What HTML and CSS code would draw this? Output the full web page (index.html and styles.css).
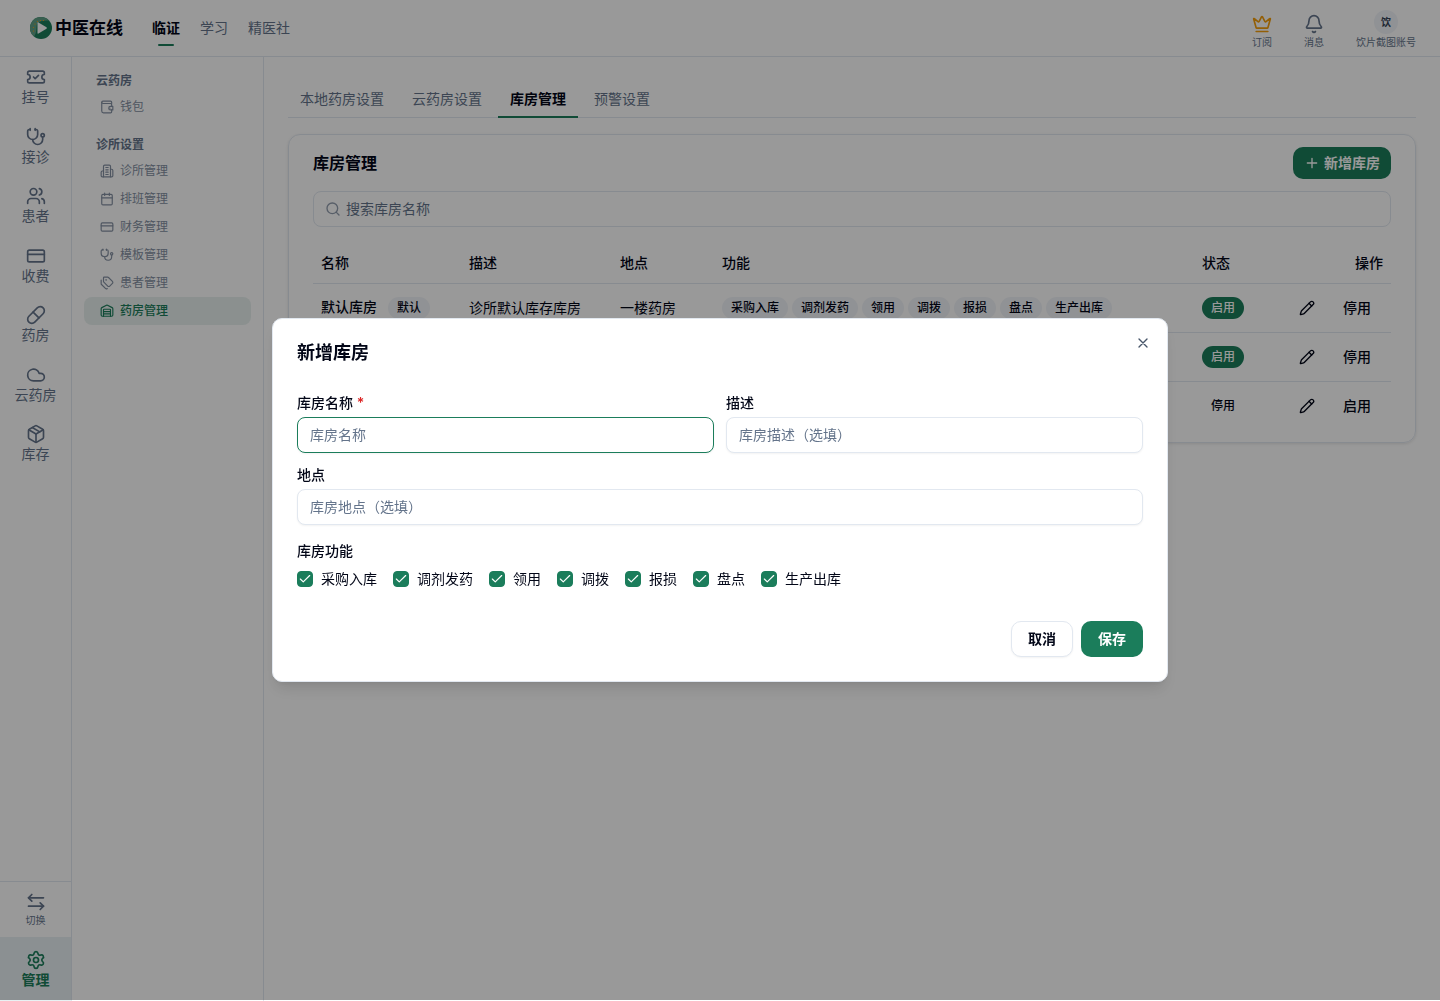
FILE: index.html
```html
<!DOCTYPE html>
<html lang="zh-CN">
<head>
<meta charset="utf-8">
<meta name="viewport" content="width=device-width, initial-scale=1">
<title>库房管理 - 中医在线</title>
<link rel="stylesheet" href="styles.css">
</head>
<body>
<svg class="sprite" aria-hidden="true">
  <symbol id="i-ticket" viewBox="0 0 24 24"><path d="M2 9a3 3 0 1 1 0 6v2a2 2 0 0 0 2 2h16a2 2 0 0 0 2-2v-2a3 3 0 1 1 0-6V7a2 2 0 0 0-2-2H4a2 2 0 0 0-2 2Z"/><path d="m9 12 2 2 4-4"/></symbol>
  <symbol id="i-steth" viewBox="0 0 24 24"><path d="M11 2v2"/><path d="M5 2v2"/><path d="M5 3H4a2 2 0 0 0-2 2v4a6 6 0 0 0 12 0V5a2 2 0 0 0-2-2h-1"/><path d="M8 15a6 6 0 0 0 12 0v-3"/><circle cx="20" cy="10" r="2"/></symbol>
  <symbol id="i-users" viewBox="0 0 24 24"><path d="M16 21v-2a4 4 0 0 0-4-4H6a4 4 0 0 0-4 4v2"/><circle cx="9" cy="7" r="4"/><path d="M22 21v-2a4 4 0 0 0-3-3.870"/><path d="M16 3.130a4 4 0 0 1 0 7.750"/></symbol>
  <symbol id="i-card" viewBox="0 0 24 24"><rect width="20" height="14" x="2" y="5" rx="2"/><path d="M2 10h20"/></symbol>
  <symbol id="i-pill" viewBox="0 0 24 24"><path d="m10.5 20.5 10-10a4.95 4.95 0 1 0-7-7l-10 10a4.95 4.95 0 1 0 7 7Z"/><path d="m8.5 8.5 7 7"/></symbol>
  <symbol id="i-cloud" viewBox="0 0 24 24"><path d="M17.5 19H9a7 7 0 1 1 6.71-9h1.79a4.5 4.5 0 1 1 0 9Z"/></symbol>
  <symbol id="i-package" viewBox="0 0 24 24"><path d="M11 21.73a2 2 0 0 0 2 0l7-4A2 2 0 0 0 21 16V8a2 2 0 0 0-1-1.73l-7-4a2 2 0 0 0-2 0l-7 4A2 2 0 0 0 3 8v8a2 2 0 0 0 1 1.73z"/><path d="M12 22V12"/><path d="m3.3 7 8.7 5 8.7-5"/><path d="m7.5 4.27 9 5.15"/></symbol>
  <symbol id="i-switch" viewBox="0 0 24 24"><path d="M7 3 3 7l4 4"/><path d="M3 7h18"/><path d="m17 13 4 4-4 4"/><path d="M21 17H3"/></symbol>
  <symbol id="i-settings" viewBox="0 0 24 24"><path d="M9.671 4.136a2.34 2.34 0 0 1 4.659 0 2.34 2.34 0 0 0 3.319 1.915 2.34 2.34 0 0 1 2.33 4.033 2.34 2.34 0 0 0 0 3.831 2.34 2.34 0 0 1-2.33 4.033 2.34 2.34 0 0 0-3.319 1.915 2.34 2.34 0 0 1-4.659 0 2.34 2.34 0 0 0-3.32-1.915 2.34 2.34 0 0 1-2.33-4.033 2.34 2.34 0 0 0 0-3.831A2.34 2.34 0 0 1 6.35 6.051a2.34 2.34 0 0 0 3.319-1.915"/><circle cx="12" cy="12" r="3"/></symbol>
  <symbol id="i-wallet" viewBox="0 0 24 24"><path d="M17 14h.01"/><path d="M22 11h-4a3 3 0 0 0 0 6h4z"/><path d="M20 11V8a2 2 0 0 0-2-2H5a2 2 0 0 1 0-4h13a2 2 0 0 1 2 2v2"/><path d="M3 4v15a3 3 0 0 0 3 3h12a2 2 0 0 0 2-2v-3"/></symbol>
  <symbol id="i-building" viewBox="0 0 24 24"><path d="M6 22V4a2 2 0 0 1 2-2h8a2 2 0 0 1 2 2v18Z"/><path d="M6 12H4a2 2 0 0 0-2 2v6a2 2 0 0 0 2 2h2"/><path d="M18 9h2a2 2 0 0 1 2 2v9a2 2 0 0 1-2 2h-2"/><path d="M10 6h4M10 10h4M10 14h4M10 18h4"/></symbol>
  <symbol id="i-calendar" viewBox="0 0 24 24"><path d="M8 2v4M16 2v4"/><rect width="18" height="18" x="3" y="4" rx="2"/><path d="M3 10h18"/></symbol>
  <symbol id="i-tags" viewBox="0 0 24 24"><path d="M13.172 2a2 2 0 0 1 1.414.586l6.71 6.71a2.4 2.4 0 0 1 0 3.408l-4.592 4.592a2.4 2.4 0 0 1-3.408 0l-6.71-6.71A2 2 0 0 1 6 9.172V3a1 1 0 0 1 1-1z"/><path d="M2 7v6.172a2 2 0 0 0 .586 1.414l6.71 6.71a2.4 2.4 0 0 0 3.191.193"/><circle cx="10.500" cy="6.500" r=".5"/></symbol>
  <symbol id="i-warehouse" viewBox="0 0 24 24"><path d="M18 21V10a1 1 0 0 0-1-1H7a1 1 0 0 0-1 1v11"/><path d="M22 19a2 2 0 0 1-2 2H4a2 2 0 0 1-2-2V8a2 2 0 0 1 1.132-1.803l7.950-3.974a2 2 0 0 1 1.837 0l7.948 3.974A2 2 0 0 1 22 8z"/><path d="M6 13h12M6 17h12"/></symbol>
  <symbol id="i-crown" viewBox="0 0 24 24"><path d="M11.562 3.266a.5.5 0 0 1 .876 0L15.390 8.870a1 1 0 0 0 1.516.294L21.183 5.500a.5.5 0 0 1 .798.519l-2.834 10.246a1 1 0 0 1-.956.734H5.810a1 1 0 0 1-.957-.734L2.020 6.020a.5.5 0 0 1 .798-.519l4.276 3.664a1 1 0 0 0 1.516-.294z"/><path d="M5 21h14"/></symbol>
  <symbol id="i-bell" viewBox="0 0 24 24"><path d="M10.268 21a2 2 0 0 0 3.464 0"/><path d="M3.262 15.326A1 1 0 0 0 4 17h16a1 1 0 0 0 .740-1.673C19.410 13.956 18 12.499 18 8A6 6 0 0 0 6 8c0 4.499-1.411 5.956-2.738 7.326"/></symbol>
  <symbol id="i-plus" viewBox="0 0 24 24"><path d="M5 12h14M12 5v14"/></symbol>
  <symbol id="i-search" viewBox="0 0 24 24"><circle cx="11" cy="11" r="8"/><path d="m21 21-4.300-4.300"/></symbol>
  <symbol id="i-pencil" viewBox="0 0 24 24"><path d="M21.174 6.812a1 1 0 0 0-3.986-3.987L3.842 16.174a2 2 0 0 0-.5.830l-1.321 4.352a.5.5 0 0 0 .623.622l4.353-1.320a2 2 0 0 0 .830-.497z"/><path d="m15 5 4 4"/></symbol>
  <symbol id="i-x" viewBox="0 0 24 24"><path d="M18 6 6 18M6 6l12 12"/></symbol>
  <symbol id="i-check" viewBox="0 0 24 24"><path d="M20 6 9 17l-5-5"/></symbol>
</svg>

<div class="app">
  <header class="topbar">
    <a class="brand" href="#">
      <svg class="brand-mark" viewBox="0 0 22 22" aria-hidden="true">
        <circle cx="11" cy="11" r="11" fill="#1b7d5b"/>
        <path d="M11 0A11 11 0 0 0 4 19.500C7 16 6 11 7 7c2-3 7-4 12-3.500A11 11 0 0 0 11 0Z" fill="#5f9e85"/>
        <g fill="#f59e0b"><circle cx="3.500" cy="14" r=".6"/><circle cx="3.500" cy="10.500" r=".6"/><circle cx="5" cy="7" r=".6"/><circle cx="7.500" cy="4.500" r=".6"/><circle cx="10.500" cy="3.500" r=".6"/><circle cx="13.500" cy="3.500" r=".6"/></g>
        <path d="M7.500 6v10q0 1 1 .5l8-4.800q.8-.7 0-1.400l-8-4.800q-1-.5-1 .5Z" fill="#fff"/>
      </svg>
      <span>中医在线</span>
    </a>
    <nav class="topnav">
      <a class="topnav-link is-active" href="#">临证</a>
      <a class="topnav-link" href="#">学习</a>
      <a class="topnav-link" href="#">精医社</a>
    </nav>
    <div class="account">
      <button class="account-item" type="button"><svg class="icon icon-20 crown"><use href="#i-crown"/></svg><span>订阅</span></button>
      <button class="account-item" type="button"><svg class="icon icon-20"><use href="#i-bell"/></svg><span>消息</span></button>
      <button class="account-item" type="button"><span class="avatar">饮</span><span>饮片截图账号</span></button>
    </div>
  </header>

  <div class="body">
    <aside class="rail">
      <nav class="rail-nav">
        <a class="rail-item" href="#"><svg class="icon icon-20"><use href="#i-ticket"/></svg>挂号</a>
        <a class="rail-item" href="#"><svg class="icon icon-20"><use href="#i-steth"/></svg>接诊</a>
        <a class="rail-item" href="#"><svg class="icon icon-20"><use href="#i-users"/></svg>患者</a>
        <a class="rail-item" href="#"><svg class="icon icon-20"><use href="#i-card"/></svg>收费</a>
        <a class="rail-item" href="#"><svg class="icon icon-20"><use href="#i-pill"/></svg>药房</a>
        <a class="rail-item" href="#"><svg class="icon icon-20"><use href="#i-cloud"/></svg>云药房</a>
        <a class="rail-item" href="#"><svg class="icon icon-20"><use href="#i-package"/></svg>库存</a>
      </nav>
      <button class="rail-switch" type="button"><svg class="icon icon-20"><use href="#i-switch"/></svg>切换</button>
      <a class="rail-item rail-manage" href="#"><svg class="icon icon-20"><use href="#i-settings"/></svg>管理</a>
    </aside>

    <aside class="subnav">
      <section class="subnav-group">
        <h2 class="subnav-title">云药房</h2>
        <a class="subnav-item" href="#"><svg class="icon icon-14"><use href="#i-wallet"/></svg>钱包</a>
      </section>
      <section class="subnav-group">
        <h2 class="subnav-title">诊所设置</h2>
        <a class="subnav-item" href="#"><svg class="icon icon-14"><use href="#i-building"/></svg>诊所管理</a>
        <a class="subnav-item" href="#"><svg class="icon icon-14"><use href="#i-calendar"/></svg>排班管理</a>
        <a class="subnav-item" href="#"><svg class="icon icon-14"><use href="#i-card"/></svg>财务管理</a>
        <a class="subnav-item" href="#"><svg class="icon icon-14"><use href="#i-steth"/></svg>模板管理</a>
        <a class="subnav-item" href="#"><svg class="icon icon-14"><use href="#i-tags"/></svg>患者管理</a>
        <a class="subnav-item is-active" href="#"><svg class="icon icon-14"><use href="#i-warehouse"/></svg>药房管理</a>
      </section>
    </aside>

    <main class="main">
      <nav class="tabs">
        <a class="tab" href="#">本地药房设置</a>
        <a class="tab" href="#">云药房设置</a>
        <a class="tab is-active" href="#">库房管理</a>
        <a class="tab" href="#">预警设置</a>
      </nav>

      <section class="card">
        <div class="card-head">
          <h1 class="card-title">库房管理</h1>
          <button class="btn btn-primary btn-small" type="button"><svg class="icon icon-16"><use href="#i-plus"/></svg>新增库房</button>
        </div>
        <label class="search">
          <svg class="icon icon-16"><use href="#i-search"/></svg>
          <input class="search-input" type="search" placeholder="搜索库房名称" aria-label="搜索库房名称">
        </label>
        <table class="table">
          <colgroup><col class="col-name"><col class="col-desc"><col class="col-place"><col><col class="col-state"><col class="col-actions"></colgroup>
          <thead>
            <tr><th>名称</th><th>描述</th><th>地点</th><th>功能</th><th>状态</th><th class="align-right">操作</th></tr>
          </thead>
          <tbody>
            <tr>
              <td><span class="strong">默认库房</span> <span class="badge badge-after">默认</span></td>
              <td>诊所默认库存库房</td>
              <td>一楼药房</td>
              <td><div class="badges"><span class="badge">采购入库</span><span class="badge">调剂发药</span><span class="badge">领用</span><span class="badge">调拨</span><span class="badge">报损</span><span class="badge">盘点</span><span class="badge">生产出库</span></div></td>
              <td><span class="badge badge-on">启用</span></td>
              <td><div class="actions"><button class="ghost" type="button" aria-label="编辑"><svg class="icon icon-16"><use href="#i-pencil"/></svg></button><button class="ghost" type="button">停用</button></div></td>
            </tr>
            <tr>
              <td></td><td></td><td></td><td></td>
              <td><span class="badge badge-on">启用</span></td>
              <td><div class="actions"><button class="ghost" type="button" aria-label="编辑"><svg class="icon icon-16"><use href="#i-pencil"/></svg></button><button class="ghost" type="button">停用</button></div></td>
            </tr>
            <tr>
              <td></td><td></td><td></td><td></td>
              <td><span class="badge badge-off">停用</span></td>
              <td><div class="actions"><button class="ghost" type="button" aria-label="编辑"><svg class="icon icon-16"><use href="#i-pencil"/></svg></button><button class="ghost" type="button">启用</button></div></td>
            </tr>
          </tbody>
        </table>
      </section>
    </main>
  </div>
</div>

<div class="overlay">
  <form class="dialog" role="dialog" aria-modal="true" aria-labelledby="dialog-title">
    <h2 class="dialog-title" id="dialog-title">新增库房</h2>
    <button class="dialog-close" type="button" aria-label="关闭"><svg class="icon icon-16"><use href="#i-x"/></svg></button>
    <div class="fields">
      <div class="field">
        <label for="name">库房名称 <span class="required">*</span></label>
        <input class="input is-focused" id="name" type="text" placeholder="库房名称">
      </div>
      <div class="field">
        <label for="desc">描述</label>
        <input class="input" id="desc" type="text" placeholder="库房描述（选填）">
      </div>
      <div class="field field-wide">
        <label for="place">地点</label>
        <input class="input" id="place" type="text" placeholder="库房地点（选填）">
      </div>
    </div>
    <fieldset class="features">
      <legend>库房功能</legend>
      <div class="checks">
        <label class="check"><span class="box"><input type="checkbox" checked><svg class="icon icon-14"><use href="#i-check"/></svg></span>采购入库</label>
        <label class="check"><span class="box"><input type="checkbox" checked><svg class="icon icon-14"><use href="#i-check"/></svg></span>调剂发药</label>
        <label class="check"><span class="box"><input type="checkbox" checked><svg class="icon icon-14"><use href="#i-check"/></svg></span>领用</label>
        <label class="check"><span class="box"><input type="checkbox" checked><svg class="icon icon-14"><use href="#i-check"/></svg></span>调拨</label>
        <label class="check"><span class="box"><input type="checkbox" checked><svg class="icon icon-14"><use href="#i-check"/></svg></span>报损</label>
        <label class="check"><span class="box"><input type="checkbox" checked><svg class="icon icon-14"><use href="#i-check"/></svg></span>盘点</label>
        <label class="check"><span class="box"><input type="checkbox" checked><svg class="icon icon-14"><use href="#i-check"/></svg></span>生产出库</label>
      </div>
    </fieldset>
    <div class="dialog-foot">
      <button class="btn btn-outline" type="button">取消</button>
      <button class="btn btn-primary" type="submit">保存</button>
    </div>
  </form>
</div>
</body>
</html>
```

FILE: styles.css
```css
:root {
  --text: #020617;
  --muted: #64748b;
  --border: #e2e8f0;
  --soft: #f1f4f8;
  --primary: #1b7d5b;
  --primary-soft: #e8f1ef;
}

* { box-sizing: border-box; }

body {
  margin: 0;
  background: #fff;
  color: var(--text);
  font-family: Inter, "Noto Sans CJK SC", sans-serif;
  font-size: 14px;
  line-height: 20px;
}

h1, h2 { margin: 0; }
a { color: inherit; text-decoration: none; }
button, input { font: inherit; color: inherit; }
button { border: 0; padding: 0; background: none; cursor: pointer; }

.sprite { position: absolute; width: 0; height: 0; }
.icon {
  flex: none;
  display: block;
  fill: none;
  stroke: currentColor;
  stroke-width: 2;
  stroke-linecap: round;
  stroke-linejoin: round;
}
.icon-14 { width: 14px; height: 14px; }
.icon-16 { width: 16px; height: 16px; }
.icon-20 { width: 20px; height: 20px; }

.app { display: flex; flex-direction: column; min-height: 100vh; }

/* Top bar */
.topbar {
  display: flex;
  align-items: center;
  height: 57px;
  padding: 0 24px 0 30px;
  border-bottom: 1px solid var(--border);
}
.brand { display: flex; align-items: center; gap: 3px; font-size: 17px; font-weight: 600; }
.brand-mark { width: 22px; height: 22px; }
.topnav { display: flex; gap: 20px; margin-left: 29px; }
.topnav-link {
  display: flex;
  flex-direction: column;
  align-items: center;
  height: 36px;
  padding-top: 8px;
  color: var(--muted);
}
.topnav-link.is-active { color: var(--text); font-weight: 600; }
.topnav-link.is-active::after {
  content: "";
  width: 16px;
  height: 2px;
  margin-top: 6px;
  border-radius: 1px;
  background: var(--primary);
}
.account { display: flex; align-items: flex-end; gap: 32px; margin-left: auto; padding-top: 2px; }
.account-item {
  display: flex;
  flex-direction: column;
  align-items: center;
  color: var(--muted);
  font-size: 10px;
  line-height: 14px;
}
.account-item .icon { margin-bottom: 1px; }
.crown { color: #f59e0b; }
.avatar {
  display: grid;
  place-items: center;
  width: 24px;
  height: 24px;
  margin-bottom: 1px;
  border-radius: 50%;
  background: var(--soft);
  color: #334155;
  font-weight: 600;
}

.body { flex: 1; display: flex; }

/* Icon rail */
.rail {
  flex: none;
  display: flex;
  flex-direction: column;
  width: 72px;
  border-right: 1px solid var(--border);
  color: var(--muted);
}
.rail-nav { flex: 1; }
.rail-item {
  display: flex;
  flex-direction: column;
  align-items: center;
  gap: 1px;
  padding: 10px 0 11px;
  line-height: 1.25;
}
.rail-switch {
  display: flex;
  flex-direction: column;
  align-items: center;
  gap: 2px;
  padding: 10px 0;
  border-top: 1px solid var(--border);
  font-size: 10px;
  line-height: 13px;
}
.rail-manage {
  padding: 13px 0;
  background: #e8f1f3;
  color: var(--primary);
  font-weight: 600;
}

/* Section menu */
.subnav {
  flex: none;
  width: 192px;
  padding: 16px 12px;
  border-right: 1px solid var(--border);
  font-size: 12px;
}
.subnav-group + .subnav-group { margin-top: 16px; }
.subnav-title {
  margin-bottom: 4px;
  padding: 0 12px;
  color: var(--muted);
  font-size: 12px;
  font-weight: 600;
  line-height: 16px;
}
.subnav-item {
  display: flex;
  align-items: center;
  gap: 6px;
  height: 28px;
  padding: 0 16px;
  border-radius: 8px;
  color: #8490a2;
}
.subnav-item.is-active {
  background: var(--primary-soft);
  color: var(--primary);
  font-weight: 500;
}

/* Page */
.main { flex: 1; min-width: 0; padding: 24px; }
.tabs { display: flex; gap: 4px; border-bottom: 1px solid var(--border); }
.tab {
  height: 37px;
  margin-bottom: -1px;
  padding: 8px 12px 0;
  border-bottom: 2px solid transparent;
  color: var(--muted);
}
.tab.is-active { border-color: var(--primary); color: var(--text); font-weight: 600; }

.card {
  margin-top: 16px;
  padding: 12px 24px;
  border: 1px solid var(--border);
  border-radius: 12px;
  box-shadow: 0 1px 3px rgba(0, 0, 0, .1);
}
.card-head { display: flex; align-items: center; justify-content: space-between; }
.card-title { font-size: 16px; font-weight: 600; line-height: 24px; }

.btn {
  display: inline-flex;
  align-items: center;
  gap: 4px;
  height: 36px;
  padding: 0 17px;
  border-radius: 10px;
  font-weight: 600;
}
.btn-small { height: 32px; padding: 0 11px; }
.btn-primary { background: var(--primary); color: #fff; }
.btn-outline {
  padding: 0 16px;
  border: 1px solid var(--border);
  background: #fff;
  box-shadow: 0 1px 2px rgba(0, 0, 0, .05);
}

.search {
  display: flex;
  align-items: center;
  gap: 5px;
  height: 36px;
  margin: 12px 0 16px;
  padding: 0 11px;
  border: 1px solid var(--border);
  border-radius: 8px;
  color: var(--muted);
}
.search .icon { opacity: .7; }
.search-input { flex: 1; min-width: 0; padding: 0; border: 0; outline: 0; background: none; }
::placeholder { color: var(--muted); opacity: 1; }

.table { width: 100%; border-collapse: separate; border-spacing: 0; table-layout: fixed; }
.col-name { width: 148px; }
.col-desc { width: 151px; }
.col-place { width: 102px; }
.col-state { width: 76px; }
.col-actions { width: 121px; }
.table th {
  height: 41px;
  padding: 0 8px;
  border-bottom: 1px solid var(--border);
  font-weight: 500;
  text-align: left;
}
.table td { height: 49px; padding: 0 8px; border-bottom: 1px solid var(--border); white-space: nowrap; }
.table tbody tr:last-child td { height: 48px; border-bottom: 0; }
.table .align-right { text-align: right; }
.strong { font-weight: 500; }

.badges { display: flex; gap: 4px; }
.badge {
  display: inline-block;
  padding: 0 9px;
  border-radius: 11px;
  background: var(--soft);
  font-size: 12px;
  font-weight: 500;
  line-height: 22px;
}
.badge-after { margin-left: 7px; }
.badge-on { background: var(--primary); color: #fff; }
.badge-off { background: none; }

.actions { display: flex; justify-content: flex-end; gap: 4px; }
.ghost { display: grid; place-items: center; height: 32px; padding: 0 12px; font-weight: 500; }

/* Dialog */
.overlay {
  position: fixed;
  inset: 0 0 1px;
  display: grid;
  place-items: center;
  background: rgba(0, 0, 0, .4);
}
.dialog {
  position: relative;
  width: 100%;
  max-width: 896px;
  padding: 24px;
  border: 1px solid var(--border);
  border-radius: 10px;
  background: #fff;
  box-shadow: 0 10px 15px -3px rgba(0, 0, 0, .1), 0 4px 6px -4px rgba(0, 0, 0, .1);
}
.dialog-title { font-size: 18px; font-weight: 600; line-height: 20px; }
.dialog-close { position: absolute; top: 16px; right: 16px; color: #475569; }
.fields { display: grid; grid-template-columns: 1fr 1fr; gap: 12px; margin-top: 30px; }
.field { display: flex; flex-direction: column; gap: 4px; font-weight: 500; }
.field-wide { grid-column: 1 / -1; }
.required { color: #dc2626; font-weight: 600; }
.input {
  width: 100%;
  height: 36px;
  padding: 0 12px 2px;
  border: 1px solid var(--border);
  border-radius: 8px;
  outline: 0;
  background: #fff;
  box-shadow: 0 1px 2px rgba(0, 0, 0, .05);
  font-weight: 400;
}
.input.is-focused, .input:focus { border-color: var(--primary); }
.features { min-width: 0; margin: 16px 0 0; padding: 0; border: 0; }
.features legend { padding: 0; font-weight: 500; }
.checks { display: flex; flex-wrap: wrap; gap: 16px; margin-top: 8px; }
.check { display: flex; align-items: center; gap: 8px; }
.box { display: grid; place-items: center; }
.box > * { grid-area: 1 / 1; }
.box input {
  appearance: none;
  width: 16px;
  height: 16px;
  margin: 0;
  border: 1px solid var(--primary);
  border-radius: 4px;
}
.box input:checked { background: var(--primary); }
.box .icon { visibility: hidden; color: #fff; pointer-events: none; }
.box input:checked + .icon { visibility: visible; }
.dialog-foot { display: flex; justify-content: flex-end; gap: 8px; margin-top: 32px; }
```
